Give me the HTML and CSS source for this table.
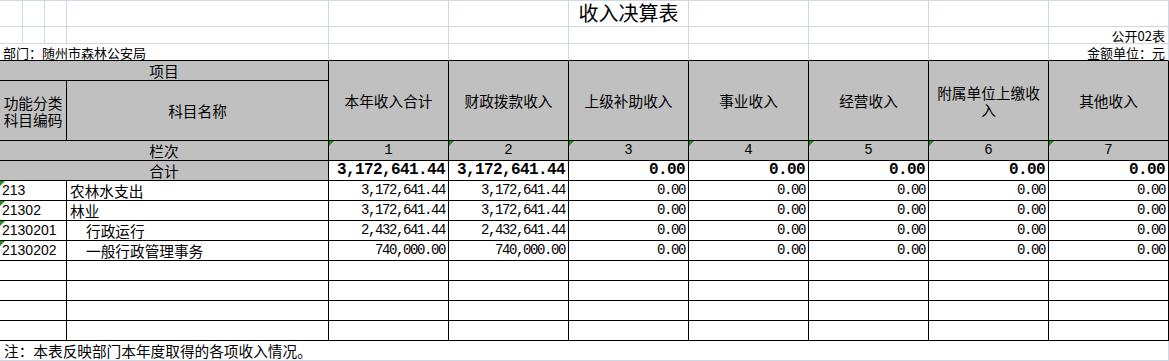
FILE: index.html
```html
<!DOCTYPE html>
<html lang="zh-CN">
<head>
<meta charset="utf-8">
<title>收入决算表</title>
<link rel="stylesheet" href="styles.css">
</head>
<body>
<div class="sheet">
  <!-- row 1 -->
  <div class="c"></div><div class="c"></div><div class="c"></div><div class="c"></div>
  <div class="c"></div><div class="c"></div>
  <div class="c title">收入决算表</div>
  <div class="c"></div><div class="c"></div><div class="c"></div><div class="c"></div>
  <!-- row 2 -->
  <div class="c"></div><div class="c"></div><div class="c"></div><div class="c"></div>
  <div class="c"></div><div class="c"></div><div class="c"></div><div class="c"></div>
  <div class="c"></div><div class="c"></div>
  <div class="c small right">公开02表</div>
  <!-- row 3 -->
  <div class="c small top-edge span-ad">部门：随州市森林公安局</div>
  <div class="c top-edge"></div><div class="c top-edge"></div><div class="c top-edge"></div>
  <div class="c top-edge"></div><div class="c top-edge"></div><div class="c top-edge"></div>
  <div class="c small right top-edge">金额单位：元</div>
  <!-- header row 4/5 -->
  <div class="c b hd center span-ad">项目</div>
  <div class="c b hd center tall">本年收入合计</div>
  <div class="c b hd center tall">财政拨款收入</div>
  <div class="c b hd center tall">上级补助收入</div>
  <div class="c b hd center tall">事业收入</div>
  <div class="c b hd center tall">经营收入</div>
  <div class="c b hd center tall wrap">附属单位上缴收入</div>
  <div class="c b hd center tall">其他收入</div>
  <div class="c b hd center span-a wrap code-head">功能分类科目编码</div>
  <div class="c b hd center">科目名称</div>
  <!-- 栏次 -->
  <div class="c b hd center span-ad">栏次</div>
  <div class="c b hd center num-h tri">1</div>
  <div class="c b hd center num-h tri">2</div>
  <div class="c b hd center num-h tri">3</div>
  <div class="c b hd center num-h tri">4</div>
  <div class="c b hd center num-h tri">5</div>
  <div class="c b hd center num-h tri">6</div>
  <div class="c b hd center num-h tri">7</div>
  <!-- 合计 -->
  <div class="c b hd center span-ad">合计</div>
  <div class="c b num bold">3,172,641.44</div>
  <div class="c b num bold">3,172,641.44</div>
  <div class="c b num bold">0.00</div>
  <div class="c b num bold">0.00</div>
  <div class="c b num bold">0.00</div>
  <div class="c b num bold">0.00</div>
  <div class="c b num bold">0.00</div>
  <!-- data -->
  <div class="c b span-a code tri">213</div>
  <div class="c b name">农林水支出</div>
  <div class="c b num">3,172,641.44</div>
  <div class="c b num">3,172,641.44</div>
  <div class="c b num">0.00</div>
  <div class="c b num">0.00</div>
  <div class="c b num">0.00</div>
  <div class="c b num">0.00</div>
  <div class="c b num">0.00</div>

  <div class="c b span-a code tri">21302</div>
  <div class="c b name">林业</div>
  <div class="c b num">3,172,641.44</div>
  <div class="c b num">3,172,641.44</div>
  <div class="c b num">0.00</div>
  <div class="c b num">0.00</div>
  <div class="c b num">0.00</div>
  <div class="c b num">0.00</div>
  <div class="c b num">0.00</div>

  <div class="c b span-a code tri">2130201</div>
  <div class="c b name indent">行政运行</div>
  <div class="c b num">2,432,641.44</div>
  <div class="c b num">2,432,641.44</div>
  <div class="c b num">0.00</div>
  <div class="c b num">0.00</div>
  <div class="c b num">0.00</div>
  <div class="c b num">0.00</div>
  <div class="c b num">0.00</div>

  <div class="c b span-a code tri">2130202</div>
  <div class="c b name indent">一般行政管理事务</div>
  <div class="c b num">740,000.00</div>
  <div class="c b num">740,000.00</div>
  <div class="c b num">0.00</div>
  <div class="c b num">0.00</div>
  <div class="c b num">0.00</div>
  <div class="c b num">0.00</div>
  <div class="c b num">0.00</div>

  <!-- empty bordered rows -->
  <div class="c b span-a"></div><div class="c b"></div>
  <div class="c b"></div><div class="c b"></div><div class="c b"></div><div class="c b"></div>
  <div class="c b"></div><div class="c b"></div><div class="c b"></div>

  <div class="c b span-a"></div><div class="c b"></div>
  <div class="c b"></div><div class="c b"></div><div class="c b"></div><div class="c b"></div>
  <div class="c b"></div><div class="c b"></div><div class="c b"></div>

  <div class="c b span-a"></div><div class="c b"></div>
  <div class="c b"></div><div class="c b"></div><div class="c b"></div><div class="c b"></div>
  <div class="c b"></div><div class="c b"></div><div class="c b"></div>

  <div class="c b span-a"></div><div class="c b"></div>
  <div class="c b"></div><div class="c b"></div><div class="c b"></div><div class="c b"></div>
  <div class="c b"></div><div class="c b"></div><div class="c b"></div>

  <!-- note -->
  <div class="c span-all note">注：本表反映部门本年度取得的各项收入情况。</div>
</div>
</body>
</html>
```

FILE: styles.css
```css
* {
  box-sizing: border-box;
}

body {
  margin: 0;
  background: #ffffff;
  color: #000000;
  font-family: "Noto Sans CJK SC", sans-serif;
}

.sheet {
  display: grid;
  grid-template-columns: 23px 22px 22px 262px repeat(7, 120px);
  grid-template-rows: 26px 17px 17px 20px 60px repeat(11, 20px);
  width: 1169px;
  border-top: 1px solid #d0d7e5;
}

.c {
  display: flex;
  align-items: center;
  padding: 0 3px;
  border-right: 1px solid #d0d7e5;
  border-bottom: 1px solid #d0d7e5;
  font-size: 14.67px;
  line-height: 17px;
  white-space: nowrap;
  overflow: hidden;
}

.b {
  border-right-color: #000000;
  border-bottom-color: #000000;
}

.top-edge {
  border-bottom-color: #000000;
}

.hd {
  background: #c0c0c0;
}

.center {
  justify-content: center;
  text-align: center;
}

.right {
  justify-content: flex-end;
}

.span-a {
  grid-column: span 3;
}

.span-ad {
  grid-column: span 4;
}

.span-all {
  grid-column: span 11;
}

.tall {
  grid-row: span 2;
}

.wrap {
  white-space: normal;
  padding: 0 4px;
}

.code-head {
  padding: 0 2px;
}

.title {
  justify-content: center;
  align-items: flex-end;
  padding-bottom: 1px;
  font-size: 20px;
  line-height: 24px;
  overflow: visible;
}

.small {
  font-size: 13px;
  line-height: 15px;
  overflow: visible;
}

.note {
  padding-left: 4px;
}

.code {
  padding-left: 2px;
  font-family: "Liberation Sans", Arial, sans-serif;
  font-size: 14px;
}

.name {
  padding-left: 3px;
}

.name.indent {
  padding-left: 19px;
}

.num {
  justify-content: flex-end;
  padding-right: 3px;
  font-family: "Liberation Mono", "Courier New", monospace;
  font-size: 14px;
  letter-spacing: -1.4px;
}

.num.bold {
  font-weight: bold;
  font-size: 16px;
  letter-spacing: -0.6px;
}

.num-h {
  font-family: "Liberation Mono", "Courier New", monospace;
  font-size: 14px;
}

.tri {
  position: relative;
}

.tri::before {
  content: "";
  position: absolute;
  left: 0;
  top: 0;
  width: 0;
  height: 0;
  border-top: 5px solid #1f8f1f;
  border-right: 5px solid transparent;
}
```
